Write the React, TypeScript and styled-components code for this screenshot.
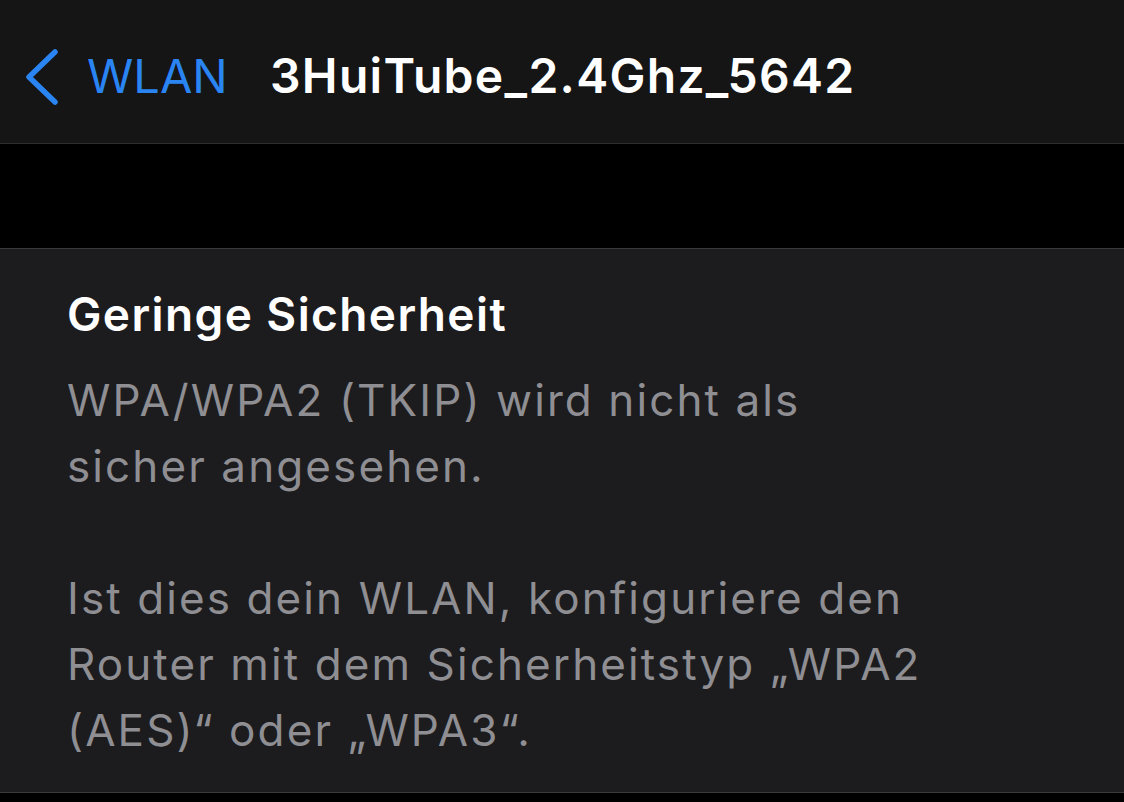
import React from 'react';
import styled, { createGlobalStyle } from 'styled-components';

const GlobalStyle = createGlobalStyle`
  html, body {
    margin: 0;
    padding: 0;
    background: #000;
  }
  body {
    font-family: Inter, 'Liberation Sans', Arial, sans-serif;
    -webkit-font-smoothing: antialiased;
  }
`;

const Screen = styled.main`
  width: 1124px;
  height: 802px;
  overflow: hidden;
  background: #000;
  display: flex;
  flex-direction: column;
`;

const NavBar = styled.header`
  height: 144px;
  box-sizing: border-box;
  padding-top: 52px;
  background: #151515;
  border-bottom: 1px solid #2e2e30;
  display: flex;
  align-items: flex-start;
`;

const BackLink = styled.a`
  width: 248px;
  margin-left: 22px;
  display: flex;
  align-items: flex-start;
  color: #2a84f2;
  font-size: 47px;
  line-height: 48px;
  text-decoration: none;
  cursor: pointer;
`;

const Chevron = styled.svg`
  width: 40px;
  height: 64px;
  margin-top: -7px;
  flex-shrink: 0;
`;

const BackLabel = styled.span`
  margin-left: 25px;
`;

const Title = styled.h1`
  margin: 0;
  color: #fff;
  font-size: 48px;
  line-height: 48px;
  font-weight: 600;
  letter-spacing: 1.3px;
`;

const Gap = styled.div`
  height: 104px;
  border-bottom: 1px solid #3a3a3c;
`;

const Card = styled.section`
  height: 544px;
  box-sizing: border-box;
  padding: 32px 40px 0 67px;
  background: #1c1c1e;
  border-bottom: 1px solid #3a3a3c;
`;

const CardTitle = styled.h2`
  margin: 0 0 20px;
  color: #fff;
  font-size: 46px;
  line-height: 66px;
  font-weight: 600;
  letter-spacing: 1.4px;
`;

const Paragraph = styled.p<{ $spaced?: boolean }>`
  margin: ${p => (p.$spaced ? '66px' : '0')} 0 0;
  color: #8e8e93;
  font-size: 44px;
  line-height: 66px;
  letter-spacing: 2.1px;
  white-space: nowrap;
`;

const App: React.FC = () => {
  return (
    <>
      <GlobalStyle />
      <Screen>
        <NavBar>
          <BackLink>
            <Chevron viewBox="0 0 40 64">
              <path
                d="M33 7 L7 32 L33 57"
                fill="none"
                stroke="#2a84f2"
                strokeWidth="5.5"
                strokeLinecap="round"
                strokeLinejoin="round"
              />
            </Chevron>
            <BackLabel>WLAN</BackLabel>
          </BackLink>
          <Title>3HuiTube_2.4Ghz_5642</Title>
        </NavBar>
        <Gap />
        <Card>
          <CardTitle>Geringe Sicherheit</CardTitle>
          <Paragraph>
            WPA/WPA2 (TKIP) wird nicht als
            <br />
            sicher angesehen.
          </Paragraph>
          <Paragraph $spaced>
            Ist dies dein WLAN, konfiguriere den
            <br />
            Router mit dem Sicherheitstyp „WPA2
            <br />
            (AES)“ oder „WPA3“.
          </Paragraph>
        </Card>
      </Screen>
    </>
  );
};

export default App;
